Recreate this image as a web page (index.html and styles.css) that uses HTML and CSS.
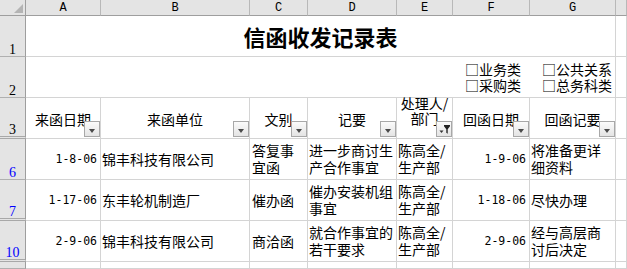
FILE: index.html
```html
<!DOCTYPE html>
<html lang="zh-CN">
<head>
<meta charset="utf-8">
<title>信函收发记录表</title>
<link rel="stylesheet" href="styles.css">
</head>
<body>
<div class="sheet">
  <div class="corner"></div>
  <div class="ch">A</div>
  <div class="ch">B</div>
  <div class="ch">C</div>
  <div class="ch">D</div>
  <div class="ch">E</div>
  <div class="ch">F</div>
  <div class="ch">G</div>
  <div class="ch"></div>

  <div class="rh">1</div>
  <div class="title">信函收发记录表</div>
  <div class="c"></div>

  <div class="rh">2</div>
  <div class="opts">
    <div class="optgrid">
      <span class="opt">□业务类
□采购类</span>
      <span class="opt">□公共关系
□总务科类</span>
    </div>
  </div>
  <div class="c"></div>

  <div class="rh hid">3</div>
  <div class="hd"><span>来函日期</span><div class="fb"></div></div>
  <div class="hd"><span>来函单位</span><div class="fb"></div></div>
  <div class="hd"><span>文别</span><div class="fb"></div></div>
  <div class="hd"><span>记要</span><div class="fb"></div></div>
  <div class="hd hd-top"><span>处理人/部门</span><div class="fb fb-on"><svg viewBox="0 0 14 14" width="14" height="14"><path d="M2.5 8.5h4l-2 2.6z" fill="#333"/><path d="M7 3h6v1.3l-2.3 2.9v4.6l-1.4-1v-3.6L7 4.3z" fill="#222"/></svg></div></div>
  <div class="hd"><span>回函日期</span><div class="fb"></div></div>
  <div class="hd"><span>回函记要</span><div class="fb"></div></div>
  <div class="c"></div>

  <div class="rh blue">6</div>
  <div class="d r"><span>1-8-06</span></div>
  <div class="d"><span>锦丰科技有限公司</span></div>
  <div class="d dc"><span>答复事宜函</span></div>
  <div class="d dd"><span>进一步商讨生产合作事宜</span></div>
  <div class="d"><span>陈高全/生产部</span></div>
  <div class="d r"><span>1-9-06</span></div>
  <div class="d dg"><span>将准备更详细资料</span></div>
  <div class="c"></div>

  <div class="rh blue hid">7</div>
  <div class="d r"><span>1-17-06</span></div>
  <div class="d"><span>东丰轮机制造厂</span></div>
  <div class="d dc"><span>催办函</span></div>
  <div class="d dd"><span>催办安装机组事宜</span></div>
  <div class="d"><span>陈高全/生产部</span></div>
  <div class="d r"><span>1-18-06</span></div>
  <div class="d dg"><span>尽快办理</span></div>
  <div class="c"></div>

  <div class="rh blue hid">10</div>
  <div class="d r"><span>2-9-06</span></div>
  <div class="d"><span>锦丰科技有限公司</span></div>
  <div class="d dc"><span>商洽函</span></div>
  <div class="d dd"><span>就合作事宜的若干要求</span></div>
  <div class="d"><span>陈高全/生产部</span></div>
  <div class="d r"><span>2-9-06</span></div>
  <div class="d dg"><span>经与高层商讨后决定</span></div>
  <div class="c"></div>

  <div class="rh"></div>
  <div class="c"></div>
  <div class="c"></div>
  <div class="c"></div>
  <div class="c"></div>
  <div class="c"></div>
  <div class="c"></div>
  <div class="c"></div>
  <div class="c"></div>
</div>
</body>
</html>
```

FILE: styles.css
```css
html, body {
  margin: 0;
  height: 100%;
  overflow: hidden;
  background: #ffffff;
}

body {
  font-family: "Noto Sans CJK SC", "Noto Sans", sans-serif;
  font-size: 14px;
  color: #000000;
}

.sheet {
  display: grid;
  grid-template-columns: 26px 75px 149px 58px 89px 56px 77px 86px 1fr;
  grid-template-rows: 16px repeat(6, 41px) 1fr;
  height: 269px;
}

.sheet > div {
  box-sizing: border-box;
  min-width: 0;
  border-right: 1px solid #d4d4d4;
  border-bottom: 1px solid #d4d4d4;
}

/* headers */
.sheet > .corner {
  position: relative;
  background: #e4e4e4;
  border-right: 1px solid #9e9e9e;
  border-bottom: 1px solid #9e9e9e;
}

.corner::after {
  content: "";
  position: absolute;
  right: 2px;
  bottom: 2px;
  width: 0;
  height: 0;
  border-left: 9px solid transparent;
  border-bottom: 9px solid #b4b4b4;
}

.sheet > .ch {
  background: #e4e4e4;
  border-right: 1px solid #b8b8b8;
  border-bottom: 1px solid #9e9e9e;
  display: flex;
  align-items: center;
  justify-content: center;
  font-family: "Liberation Mono", monospace;
  font-size: 12px;
  line-height: 1;
}

.sheet > .rh {
  background: #e4e4e4;
  border-right: 1px solid #9e9e9e;
  border-bottom: 1px solid #b0b0b0;
  display: flex;
  align-items: flex-end;
  justify-content: center;
  font-family: "Liberation Serif", serif;
  font-size: 14px;
  line-height: 13px;
}

.sheet > .rh.hid {
  border-bottom: 3px double #a8a8a8;
}

.rh.blue {
  color: #0000ff;
}

/* row 1 & 2 */
.title {
  grid-column: 2 / 9;
  display: flex;
  align-items: center;
  justify-content: center;
  font-size: 22px;
  font-weight: 700;
  line-height: 24px;
}

.opts {
  grid-column: 2 / 9;
  display: flex;
  align-items: center;
  justify-content: flex-end;
  padding-right: 3px;
}

.optgrid {
  display: grid;
  grid-template-columns: auto auto;
  column-gap: 21px;
  line-height: 16px;
}

.opt {
  white-space: pre-line;
}

/* row 3 headers */
.hd {
  position: relative;
  display: flex;
  align-items: center;
  justify-content: center;
  text-align: center;
  line-height: 16px;
  padding-top: 1px;
}

.hd-top {
  align-items: flex-start;
  padding-top: 0;
}

.hd-top span {
  margin-top: -2px;
  line-height: 15px;
}

.fb {
  position: absolute;
  right: 0;
  bottom: 1px;
  width: 16px;
  height: 16px;
  box-sizing: border-box;
  border: 1px solid #a8a8a8;
  background: linear-gradient(#fbfbfb, #e4e4e4);
  display: flex;
  align-items: center;
  justify-content: center;
}

.fb::after {
  content: "";
  width: 0;
  height: 0;
  margin-top: 3px;
  border-left: 3.5px solid transparent;
  border-right: 3.5px solid transparent;
  border-top: 4px solid #4a4a4a;
}

.fb.fb-on::after {
  content: none;
}

/* data cells */
.d {
  display: flex;
  align-items: center;
  line-height: 17px;
  padding: 0 2px 0 1px;
}

.d.r {
  justify-content: flex-end;
  padding-right: 3px;
  font-family: "DejaVu Sans Mono", monospace;
  font-size: 11.5px;
}

.d.dc {
  padding: 0 2px 0 2px;
}

.d.dd {
  padding: 0 0 0 1px;
}

.d.dg {
  padding: 0 5px 0 1px;
}
```
